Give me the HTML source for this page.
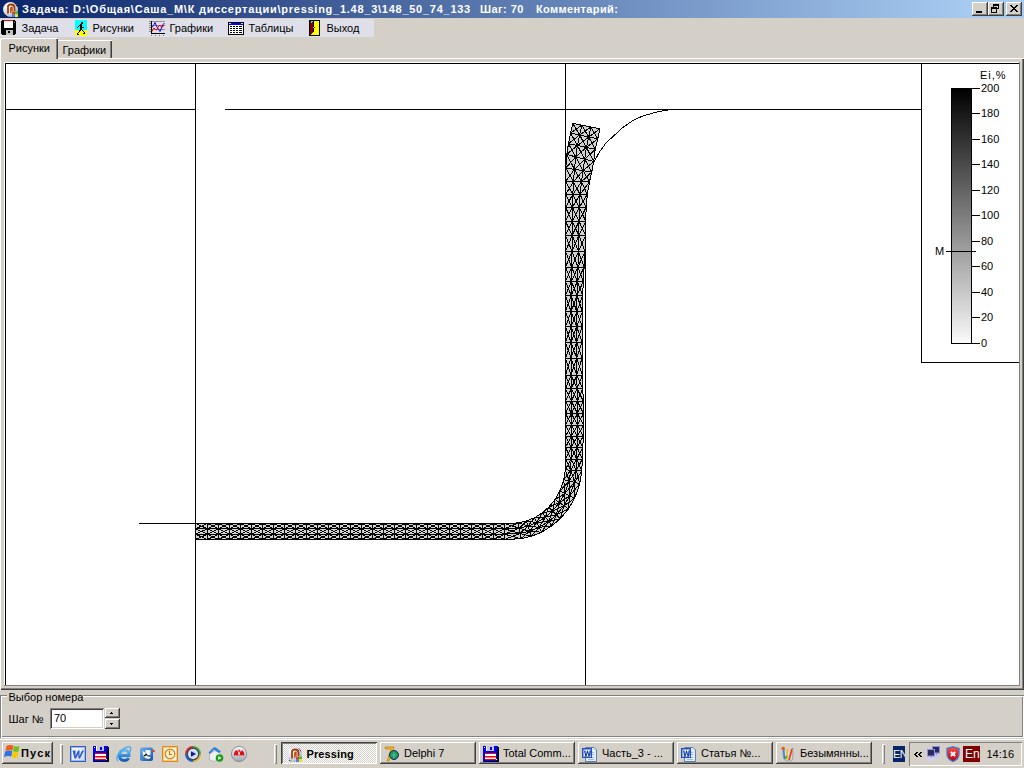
<!DOCTYPE html>
<html><head><meta charset="utf-8"><style>
html,body{margin:0;padding:0;}
body{width:1024px;height:768px;overflow:hidden;position:relative;background:#D4D0C8;font-family:"Liberation Sans", sans-serif;font-size:11px;}
.tx{position:absolute;white-space:nowrap;line-height:12px;font-size:11px;}
div{box-sizing:border-box;}
</style></head><body>
<div style="position:absolute;left:0px;top:0px;width:1024px;height:18px;background:linear-gradient(to right,#0A246A 0px,#A6CAF0 970px);"></div><svg style="position:absolute;left:2px;top:1px;" width="16" height="16" viewBox="0 0 16 16"><defs><radialGradient id="cd" cx="0.35" cy="0.3" r="0.8"><stop offset="0" stop-color="#FFFFFF"/><stop offset="0.5" stop-color="#D8E4F0"/><stop offset="1" stop-color="#A0A8C0"/></radialGradient></defs><circle cx="8.5" cy="8.5" r="7.5" fill="url(#cd)"/><path d="M13,2.5 L15.5,6 M3,14 L5.5,16" stroke="#000" stroke-width="1" stroke-dasharray="1 1"/><path d="M6,12.5 V5.5 Q6,3.5 9,3.5 Q12.5,3.5 12.5,7 V10" fill="none" stroke="#A83808" stroke-width="1.8"/><path d="M8.8,12 V7 Q8.8,6 10,6.3 V10" fill="none" stroke="#C05010" stroke-width="1.4"/><rect x="10" y="10.5" width="3" height="2.5" fill="#F04010"/><rect x="13" y="10.5" width="3" height="2.5" fill="#40C040"/><rect x="10" y="13" width="3" height="3" fill="#5080E0"/><rect x="13" y="13" width="3" height="3" fill="#F0E020"/></svg><div class="tx" style="left:22px;top:3px;font-weight:bold;color:#FFF;letter-spacing:0.74px;">Задача: D:\Общая\Саша_М\К диссертации\pressing_1.48_3\148_50_74_133</div><div class="tx" style="left:480px;top:3px;font-weight:bold;color:#FFF;letter-spacing:0.45px;">Шаг: 70</div><div class="tx" style="left:536px;top:3px;font-weight:bold;color:#FFF;letter-spacing:0.37px;">Комментарий:</div><div style="position:absolute;left:972px;top:2px;width:16px;height:14px;background:#D4D0C8;box-shadow: inset -1px -1px #404040, inset 1px 1px #FFFFFF, inset -2px -2px #808080;"></div><div style="position:absolute;left:988px;top:2px;width:16px;height:14px;background:#D4D0C8;box-shadow: inset -1px -1px #404040, inset 1px 1px #FFFFFF, inset -2px -2px #808080;"></div><div style="position:absolute;left:1006px;top:2px;width:16px;height:14px;background:#D4D0C8;box-shadow: inset -1px -1px #404040, inset 1px 1px #FFFFFF, inset -2px -2px #808080;"></div><div style="position:absolute;left:976px;top:11px;width:6px;height:2px;background:#000;"></div><svg style="position:absolute;left:991px;top:4px;shape-rendering:crispEdges" width="8" height="9" viewBox="0 0 8 9"><g fill="#000"><rect x="2" y="0" width="1" height="1"/><rect x="3" y="0" width="1" height="1"/><rect x="4" y="0" width="1" height="1"/><rect x="5" y="0" width="1" height="1"/><rect x="6" y="0" width="1" height="1"/><rect x="7" y="0" width="1" height="1"/><rect x="2" y="1" width="1" height="1"/><rect x="3" y="1" width="1" height="1"/><rect x="4" y="1" width="1" height="1"/><rect x="5" y="1" width="1" height="1"/><rect x="6" y="1" width="1" height="1"/><rect x="7" y="1" width="1" height="1"/><rect x="2" y="2" width="1" height="1"/><rect x="7" y="2" width="1" height="1"/><rect x="0" y="3" width="1" height="1"/><rect x="1" y="3" width="1" height="1"/><rect x="2" y="3" width="1" height="1"/><rect x="3" y="3" width="1" height="1"/><rect x="4" y="3" width="1" height="1"/><rect x="5" y="3" width="1" height="1"/><rect x="7" y="3" width="1" height="1"/><rect x="0" y="4" width="1" height="1"/><rect x="1" y="4" width="1" height="1"/><rect x="2" y="4" width="1" height="1"/><rect x="3" y="4" width="1" height="1"/><rect x="4" y="4" width="1" height="1"/><rect x="5" y="4" width="1" height="1"/><rect x="6" y="4" width="1" height="1"/><rect x="7" y="4" width="1" height="1"/><rect x="0" y="5" width="1" height="1"/><rect x="5" y="5" width="1" height="1"/><rect x="0" y="6" width="1" height="1"/><rect x="5" y="6" width="1" height="1"/><rect x="0" y="7" width="1" height="1"/><rect x="5" y="7" width="1" height="1"/><rect x="0" y="8" width="1" height="1"/><rect x="1" y="8" width="1" height="1"/><rect x="2" y="8" width="1" height="1"/><rect x="3" y="8" width="1" height="1"/><rect x="4" y="8" width="1" height="1"/><rect x="5" y="8" width="1" height="1"/></g></svg><svg style="position:absolute;left:1010px;top:5px;shape-rendering:crispEdges" width="8" height="7" viewBox="0 0 8 7"><g fill="#000"><rect x="0" y="0" width="1" height="1"/><rect x="1" y="0" width="1" height="1"/><rect x="6" y="0" width="1" height="1"/><rect x="7" y="0" width="1" height="1"/><rect x="1" y="1" width="1" height="1"/><rect x="2" y="1" width="1" height="1"/><rect x="5" y="1" width="1" height="1"/><rect x="6" y="1" width="1" height="1"/><rect x="2" y="2" width="1" height="1"/><rect x="3" y="2" width="1" height="1"/><rect x="4" y="2" width="1" height="1"/><rect x="5" y="2" width="1" height="1"/><rect x="3" y="3" width="1" height="1"/><rect x="4" y="3" width="1" height="1"/><rect x="2" y="4" width="1" height="1"/><rect x="3" y="4" width="1" height="1"/><rect x="4" y="4" width="1" height="1"/><rect x="5" y="4" width="1" height="1"/><rect x="1" y="5" width="1" height="1"/><rect x="2" y="5" width="1" height="1"/><rect x="5" y="5" width="1" height="1"/><rect x="6" y="5" width="1" height="1"/><rect x="0" y="6" width="1" height="1"/><rect x="1" y="6" width="1" height="1"/><rect x="6" y="6" width="1" height="1"/><rect x="7" y="6" width="1" height="1"/></g></svg><div style="position:absolute;left:0px;top:18px;width:1024px;height:20px;background:#D4D0C8;"></div><div style="position:absolute;left:0px;top:19px;width:374px;height:18px;background:#DEDFE8;"></div><svg style="position:absolute;left:1px;top:20px;shape-rendering:crispEdges" width="15" height="15" viewBox="0 0 15 15"><path d="M1,0H14V1H15V14H14V15H1V14H0V1H1Z" fill="#000"/><rect x="3" y="0" width="9" height="1" fill="#FF0000"/><rect x="3" y="1" width="9" height="7" fill="#FFFFFF"/><rect x="5" y="10" width="7" height="5" fill="#C0C0C0"/><rect x="7" y="11" width="2" height="2" fill="#000"/><rect x="13" y="2" width="1" height="1" fill="#909090"/></svg><div class="tx" style="left:21.5px;top:22px;color:#000;">Задача</div><svg style="position:absolute;left:75px;top:20px;shape-rendering:crispEdges" width="12" height="16" viewBox="0 0 12 16"><rect x="0" y="0" width="12" height="10" fill="#00FFFF"/><rect x="0" y="10" width="12" height="6" fill="#FFFF00"/><g fill="#000"><rect x="6" y="2" width="2" height="1"/><rect x="6" y="3" width="2" height="1"/><rect x="5" y="4" width="2" height="1"/><rect x="4" y="5" width="3" height="1"/><rect x="3" y="6" width="1" height="1"/><rect x="5" y="6" width="2" height="1"/><rect x="2" y="7" width="1" height="1"/><rect x="5" y="7" width="4" height="1"/><rect x="5" y="8" width="2" height="1"/><rect x="5" y="9" width="2" height="1"/><rect x="4" y="10" width="2" height="1"/><rect x="7" y="10" width="1" height="1"/><rect x="4" y="11" width="1" height="1"/><rect x="8" y="11" width="1" height="1"/><rect x="3" y="12" width="1" height="1"/><rect x="9" y="12" width="1" height="1"/><rect x="2" y="13" width="1" height="1"/><rect x="8" y="13" width="2" height="1"/><rect x="2" y="14" width="2" height="1"/></g></svg><div class="tx" style="left:92.5px;top:22px;color:#000;">Рисунки</div><svg style="position:absolute;left:149px;top:20px;" width="16" height="16" viewBox="0 0 16 16"><path d="M0,1.5H16M0,5.5H16M0,9.5H16" stroke="#909090" stroke-width="1"/><path d="M0,3.5h2M0,7.5h2M0,11.5h2M2.5,15v1M6.5,15v1M10.5,15v1M14.5,15v1" stroke="#808080" stroke-width="1"/><path d="M3,7.5L5,4.5L6,2.5L7,5L8,7L10,10L11,11.5L12,9L13,6L14,4.5L15.5,3" stroke="#0000FF" fill="none" stroke-width="1"/><path d="M3,11.5L4,9.5L5,8L7,10L8,9.5L9,7L10,6L11,5L12,6.5L13,7.5L14,6L15.5,5" stroke="#FF0000" fill="none" stroke-width="1"/><rect x="2" y="1" width="1" height="13" fill="#000"/><rect x="2" y="13" width="14" height="1" fill="#000"/></svg><div class="tx" style="left:169.5px;top:22px;color:#000;">Графики</div><svg style="position:absolute;left:228px;top:22px;shape-rendering:crispEdges" width="16" height="13" viewBox="0 0 16 13"><rect x="0" y="0" width="16" height="13" fill="#000"/><rect x="1" y="1" width="14" height="11" fill="#FFF"/><rect x="1" y="1" width="14" height="2" fill="#0000FF"/><rect x="1" y="1" width="2" height="1" fill="#E0E0B0"/><rect x="13" y="1" width="2" height="1" fill="#E0E0B0"/><rect x="2" y="4" width="2" height="1" fill="#000"/><rect x="5" y="4" width="2" height="1" fill="#000"/><rect x="8" y="4" width="2" height="1" fill="#000"/><rect x="11" y="4" width="3" height="1" fill="#000"/><rect x="2" y="6" width="2" height="1" fill="#000"/><rect x="5" y="6" width="2" height="1" fill="#000"/><rect x="8" y="6" width="2" height="1" fill="#000"/><rect x="11" y="6" width="3" height="1" fill="#000"/><rect x="2" y="8" width="2" height="1" fill="#000"/><rect x="5" y="8" width="2" height="1" fill="#000"/><rect x="8" y="8" width="2" height="1" fill="#000"/><rect x="11" y="8" width="3" height="1" fill="#000"/><rect x="2" y="10" width="2" height="1" fill="#000"/><rect x="5" y="10" width="2" height="1" fill="#000"/><rect x="8" y="10" width="2" height="1" fill="#000"/><rect x="11" y="10" width="3" height="1" fill="#000"/></svg><div class="tx" style="left:248.5px;top:22px;color:#000;">Таблицы</div><svg style="position:absolute;left:309px;top:20px;shape-rendering:crispEdges" width="11" height="16" viewBox="0 0 11 16"><rect x="0" y="0" width="11" height="16" fill="#000"/><rect x="1" y="1" width="3" height="14" fill="#800000"/><rect x="5" y="1" width="5" height="14" fill="#FFFF00"/><rect x="4" y="12" width="1" height="3" fill="#FFFF00"/><rect x="3" y="13" width="1" height="2" fill="#FFFF00"/><rect x="2" y="14" width="1" height="1" fill="#FFFF00"/><rect x="2" y="1" width="2" height="1" fill="#00FFFF"/><rect x="2" y="2" width="1" height="1" fill="#00FFFF"/><rect x="4" y="7" width="1" height="1" fill="#FFFF00"/><rect x="5" y="7" width="1" height="1" fill="#000"/></svg><div class="tx" style="left:326.5px;top:22px;color:#000;">Выход</div><div style="position:absolute;left:0px;top:58px;width:1024px;height:632px;background:#D4D0C8;box-shadow: inset 1px 1px #FFFFFF, inset -1px -1px #404040, inset -2px -2px #808080;"></div><div style="position:absolute;left:57px;top:40px;width:55px;height:18px;background:#D4D0C8;box-shadow: inset 0 1px #FFFFFF, inset -1px 0 #404040, inset -2px 0 #808080;"></div><div class="tx" style="left:62.5px;top:44px;color:#000;">Графики</div><div style="position:absolute;left:0px;top:38px;width:58px;height:21px;background:#D4D0C8;box-shadow: inset 1px 1px #FFFFFF, inset -1px 0 #404040, inset -2px 0 #808080;border-top-left-radius:2px;"></div><div class="tx" style="left:8.5px;top:42px;color:#000;">Рисунки</div><div style="position:absolute;left:4px;top:62px;width:1016px;height:624px;background:#FFF;box-shadow: inset 1px 1px #FFFFFF, inset -1px -1px #808080;overflow:hidden"><svg style="position:absolute;left:0;top:0" width="1015" height="623" viewBox="4 62 1015 623" shape-rendering="crispEdges"><path d="M5.5,63V685M5,63.5H1019" stroke="#000"/><path d="M5,109.5H195M225,109.5H921M195.5,63V685M565.5,63V470M585.5,243V685M139,523.5H196" stroke="#000"/><path d="M671,109.5 L658,111.7 L644,115.6 L634.5,119.5 L623,127.3 L606,143 L599.5,152 L594.3,161.2 L591,168" fill="none" stroke="#000"/><path d="M921.5,63V362.5H1019" fill="none" stroke="#000"/><defs><linearGradient id="g" x1="0" y1="0" x2="0" y2="1"><stop offset="0" stop-color="#000"/><stop offset="1" stop-color="#FAFAFA"/></linearGradient></defs><rect x="951.5" y="88.5" width="20" height="255" fill="url(#g)" stroke="#000"/><path d="M971,88.5H980M971,113.5H980M971,139.5H980M971,164.5H980M971,190.5H980M971,215.5H980M971,241.5H980M971,266.5H980M971,292.5H980M971,317.5H980M971,343.5H980M946,251.5H976" stroke="#000"/><path d="M195.5,523.5 L207.5,523.5 L218.5,523.5 L229.5,523.5 L240.5,523.5 L251.5,523.5 L262.5,523.5 L273.5,523.5 L284.5,523.5 L295.5,523.5 L306.5,523.5 L317.5,523.5 L328.5,523.5 L339.5,523.5 L350.5,523.5 L361.5,523.5 L372.5,523.5 L383.5,523.5 L394.5,523.5 L405.5,523.5 L416.5,523.5 L427.5,523.5 L438.5,523.5 L449.5,523.5 L460.5,523.5 L471.5,523.5 L482.5,523.5 L493.5,523.5 L504.5,523.5 L518.4,522.9 L526.4,521.0 L534.4,517.8 L542.4,512.8 L548.7,507.2 L555.1,499.5 L559.8,491.1 L563.8,479.7 L565.3,469.8 L565.5,459.0 L565.5,447.3 L565.5,436.3 L565.5,425.2 L565.5,413.5 L565.5,401.1 L565.5,388.7 L565.5,375.1 L565.5,358.0 L565.5,342.3 L565.5,326.7 L565.5,311.7 L565.5,295.5 L565.5,281.5 L565.5,267.2 L565.5,251.5 L565.5,235.4 L565.5,221.3 L565.5,207.3 L565.5,194.5 L565.5,181.7 L565.8,168.0 L566.7,154.5 L568.5,143.6 L570.5,133.1 L572.8,123.3 L599.8,128.8 L597.8,138.9 L595.3,149.3 L593.7,161.5 L591.8,172.0 L589.5,181.7 L587.3,194.5 L586.2,207.3 L585.7,221.3 L585.6,235.4 L585.0,251.5 L584.1,267.2 L583.3,281.5 L582.7,295.5 L582.4,311.7 L582.2,326.7 L582.1,342.3 L582.1,358.0 L582.4,375.1 L582.8,388.7 L583.3,401.1 L583.5,413.5 L583.5,425.2 L583.3,436.3 L582.8,447.3 L582.3,459.0 L581.8,471.0 L579.8,483.7 L574.7,498.2 L568.4,508.9 L560.2,518.7 L551.9,525.8 L541.5,532.2 L531.2,536.3 L520.8,538.7 L504.5,539.5 L493.5,539.5 L482.5,539.5 L471.5,539.5 L460.5,539.5 L449.5,539.5 L438.5,539.5 L427.5,539.5 L416.5,539.5 L405.5,539.5 L394.5,539.5 L383.5,539.5 L372.5,539.5 L361.5,539.5 L350.5,539.5 L339.5,539.5 L328.5,539.5 L317.5,539.5 L306.5,539.5 L295.5,539.5 L284.5,539.5 L273.5,539.5 L262.5,539.5 L251.5,539.5 L240.5,539.5 L229.5,539.5 L218.5,539.5 L207.5,539.5 L195.5,539.5Z" fill="#D2D2D2" stroke="#000"/><path d="M195.5,523.5L207.5,528.8M195.5,528.8L207.5,523.5M195.5,528.8L207.5,534.2M195.5,534.2L207.5,528.8M195.5,534.2L207.5,539.5M195.5,539.5L207.5,534.2M207.5,523.5L218.5,528.8M207.5,528.8L218.5,523.5M207.5,528.8L218.5,534.2M207.5,534.2L218.5,528.8M207.5,534.2L218.5,539.5M207.5,539.5L218.5,534.2M218.5,523.5L229.5,528.8M218.5,528.8L229.5,523.5M218.5,528.8L229.5,534.2M218.5,534.2L229.5,528.8M218.5,534.2L229.5,539.5M218.5,539.5L229.5,534.2M229.5,523.5L240.5,528.8M229.5,528.8L240.5,523.5M229.5,528.8L240.5,534.2M229.5,534.2L240.5,528.8M229.5,534.2L240.5,539.5M229.5,539.5L240.5,534.2M240.5,523.5L251.5,528.8M240.5,528.8L251.5,523.5M240.5,528.8L251.5,534.2M240.5,534.2L251.5,528.8M240.5,534.2L251.5,539.5M240.5,539.5L251.5,534.2M251.5,523.5L262.5,528.8M251.5,528.8L262.5,523.5M251.5,528.8L262.5,534.2M251.5,534.2L262.5,528.8M251.5,534.2L262.5,539.5M251.5,539.5L262.5,534.2M262.5,523.5L273.5,528.8M262.5,528.8L273.5,523.5M262.5,528.8L273.5,534.2M262.5,534.2L273.5,528.8M262.5,534.2L273.5,539.5M262.5,539.5L273.5,534.2M273.5,523.5L284.5,528.8M273.5,528.8L284.5,523.5M273.5,528.8L284.5,534.2M273.5,534.2L284.5,528.8M273.5,534.2L284.5,539.5M273.5,539.5L284.5,534.2M284.5,523.5L295.5,528.8M284.5,528.8L295.5,523.5M284.5,528.8L295.5,534.2M284.5,534.2L295.5,528.8M284.5,534.2L295.5,539.5M284.5,539.5L295.5,534.2M295.5,523.5L306.5,528.8M295.5,528.8L306.5,523.5M295.5,528.8L306.5,534.2M295.5,534.2L306.5,528.8M295.5,534.2L306.5,539.5M295.5,539.5L306.5,534.2M306.5,523.5L317.5,528.8M306.5,528.8L317.5,523.5M306.5,528.8L317.5,534.2M306.5,534.2L317.5,528.8M306.5,534.2L317.5,539.5M306.5,539.5L317.5,534.2M317.5,523.5L328.5,528.8M317.5,528.8L328.5,523.5M317.5,528.8L328.5,534.2M317.5,534.2L328.5,528.8M317.5,534.2L328.5,539.5M317.5,539.5L328.5,534.2M328.5,523.5L339.5,528.8M328.5,528.8L339.5,523.5M328.5,528.8L339.5,534.2M328.5,534.2L339.5,528.8M328.5,534.2L339.5,539.5M328.5,539.5L339.5,534.2M339.5,523.5L350.5,528.8M339.5,528.8L350.5,523.5M339.5,528.8L350.5,534.2M339.5,534.2L350.5,528.8M339.5,534.2L350.5,539.5M339.5,539.5L350.5,534.2M350.5,523.5L361.5,528.8M350.5,528.8L361.5,523.5M350.5,528.8L361.5,534.2M350.5,534.2L361.5,528.8M350.5,534.2L361.5,539.5M350.5,539.5L361.5,534.2M361.5,523.5L372.5,528.8M361.5,528.8L372.5,523.5M361.5,528.8L372.5,534.2M361.5,534.2L372.5,528.8M361.5,534.2L372.5,539.5M361.5,539.5L372.5,534.2M372.5,523.5L383.5,528.8M372.5,528.8L383.5,523.5M372.5,528.8L383.5,534.2M372.5,534.2L383.5,528.8M372.5,534.2L383.5,539.5M372.5,539.5L383.5,534.2M383.5,523.5L394.5,528.8M383.5,528.8L394.5,523.5M383.5,528.8L394.5,534.2M383.5,534.2L394.5,528.8M383.5,534.2L394.5,539.5M383.5,539.5L394.5,534.2M394.5,523.5L405.5,528.8M394.5,528.8L405.5,523.5M394.5,528.8L405.5,534.2M394.5,534.2L405.5,528.8M394.5,534.2L405.5,539.5M394.5,539.5L405.5,534.2M405.5,523.5L416.5,528.8M405.5,528.8L416.5,523.5M405.5,528.8L416.5,534.2M405.5,534.2L416.5,528.8M405.5,534.2L416.5,539.5M405.5,539.5L416.5,534.2M416.5,523.5L427.5,528.8M416.5,528.8L427.5,523.5M416.5,528.8L427.5,534.2M416.5,534.2L427.5,528.8M416.5,534.2L427.5,539.5M416.5,539.5L427.5,534.2M427.5,523.5L438.5,528.8M427.5,528.8L438.5,523.5M427.5,528.8L438.5,534.2M427.5,534.2L438.5,528.8M427.5,534.2L438.5,539.5M427.5,539.5L438.5,534.2M438.5,523.5L449.5,528.8M438.5,528.8L449.5,523.5M438.5,528.8L449.5,534.2M438.5,534.2L449.5,528.8M438.5,534.2L449.5,539.5M438.5,539.5L449.5,534.2M449.5,523.5L460.5,528.8M449.5,528.8L460.5,523.5M449.5,528.8L460.5,534.2M449.5,534.2L460.5,528.8M449.5,534.2L460.5,539.5M449.5,539.5L460.5,534.2M460.5,523.5L471.5,528.8M460.5,528.8L471.5,523.5M460.5,528.8L471.5,534.2M460.5,534.2L471.5,528.8M460.5,534.2L471.5,539.5M460.5,539.5L471.5,534.2M471.5,523.5L482.5,528.8M471.5,528.8L482.5,523.5M471.5,528.8L482.5,534.2M471.5,534.2L482.5,528.8M471.5,534.2L482.5,539.5M471.5,539.5L482.5,534.2M482.5,523.5L493.5,528.8M482.5,528.8L493.5,523.5M482.5,528.8L493.5,534.2M482.5,534.2L493.5,528.8M482.5,534.2L493.5,539.5M482.5,539.5L493.5,534.2M493.5,523.5L504.5,528.8M493.5,528.8L504.5,523.5M493.5,528.8L504.5,534.2M493.5,534.2L504.5,528.8M493.5,534.2L504.5,539.5M493.5,539.5L504.5,534.2M504.5,523.5L519.2,528.2M504.5,528.8L518.4,522.9M504.5,528.8L520.0,533.4M504.5,534.2L519.2,528.2M504.5,534.2L520.8,538.7M504.5,539.5L520.0,533.4M518.4,522.9L528.0,526.1M519.2,528.2L526.4,521.0M519.2,528.2L529.6,531.2M520.0,533.4L528.0,526.1M520.0,533.4L531.2,536.3M520.8,538.7L529.6,531.2M526.4,521.0L536.7,522.6M528.0,526.1L534.4,517.8M528.0,526.1L539.1,527.4M529.6,531.2L536.7,522.6M529.6,531.2L541.5,532.2M531.2,536.3L539.1,527.4M534.4,517.8L545.5,517.1M536.7,522.6L542.4,512.8M536.7,522.6L548.7,521.5M539.1,527.4L545.5,517.1M539.1,527.4L551.9,525.8M541.5,532.2L548.7,521.5M542.4,512.8L552.5,511.1M545.5,517.1L548.7,507.2M545.5,517.1L556.3,514.9M548.7,521.5L552.5,511.1M548.7,521.5L560.2,518.7M551.9,525.8L556.3,514.9M548.7,507.2L559.5,502.6M552.5,511.1L555.1,499.5M552.5,511.1L564.0,505.8M556.3,514.9L559.5,502.6M556.3,514.9L568.4,508.9M560.2,518.7L564.0,505.8M555.1,499.5L564.8,493.5M559.5,502.6L559.8,491.1M559.5,502.6L569.7,495.8M564.0,505.8L564.8,493.5M564.0,505.8L574.7,498.2M568.4,508.9L569.7,495.8M559.8,491.1L569.2,481.0M564.8,493.5L563.8,479.7M564.8,493.5L574.5,482.3M569.7,495.8L569.2,481.0M569.7,495.8L579.8,483.7M574.7,498.2L574.5,482.3M563.8,479.7L570.8,470.2M569.2,481.0L565.3,469.8M569.2,481.0L576.3,470.6M574.5,482.3L570.8,470.2M574.5,482.3L581.8,471.0M579.8,483.7L576.3,470.6M565.3,469.8L571.1,459.0M570.8,470.2L565.5,459.0M570.8,470.2L576.7,459.0M576.3,470.6L571.1,459.0M576.3,470.6L582.3,459.0M581.8,471.0L576.7,459.0M565.5,459.0L571.3,447.3M571.1,459.0L565.5,447.3M571.1,459.0L577.0,447.3M576.7,459.0L571.3,447.3M576.7,459.0L582.8,447.3M582.3,459.0L577.0,447.3M565.5,447.3L571.4,436.3M571.3,447.3L565.5,436.3M571.3,447.3L577.3,436.3M577.0,447.3L571.4,436.3M577.0,447.3L583.3,436.3M582.8,447.3L577.3,436.3M565.5,436.3L571.5,425.2M571.4,436.3L565.5,425.2M571.4,436.3L577.5,425.2M577.3,436.3L571.5,425.2M577.3,436.3L583.5,425.2M583.3,436.3L577.5,425.2M565.5,425.2L571.5,413.5M571.5,425.2L565.5,413.5M571.5,425.2L577.5,413.5M577.5,425.2L571.5,413.5M577.5,425.2L583.5,413.5M583.5,425.2L577.5,413.5M565.5,413.5L571.4,401.1M571.5,413.5L565.5,401.1M571.5,413.5L577.4,401.1M577.5,413.5L571.4,401.1M577.5,413.5L583.3,401.1M583.5,413.5L577.4,401.1M565.5,401.1L571.3,388.7M571.4,401.1L565.5,388.7M571.4,401.1L577.1,388.7M577.4,401.1L571.3,388.7M577.4,401.1L582.8,388.7M583.3,401.1L577.1,388.7M565.5,388.7L571.1,375.1M571.3,388.7L565.5,375.1M571.3,388.7L576.8,375.1M577.1,388.7L571.1,375.1M577.1,388.7L582.4,375.1M582.8,388.7L576.8,375.1M565.5,375.1L571.0,358.0M571.1,375.1L565.5,358.0M571.1,375.1L576.6,358.0M576.8,375.1L571.0,358.0M576.8,375.1L582.1,358.0M582.4,375.1L576.6,358.0M565.5,358.0L571.0,342.3M571.0,358.0L565.5,342.3M571.0,358.0L576.6,342.3M576.6,358.0L571.0,342.3M576.6,358.0L582.1,342.3M582.1,358.0L576.6,342.3M565.5,342.3L571.1,326.7M571.0,342.3L565.5,326.7M571.0,342.3L576.7,326.7M576.6,342.3L571.1,326.7M576.6,342.3L582.2,326.7M582.1,342.3L576.7,326.7M565.5,326.7L571.1,311.7M571.1,326.7L565.5,311.7M571.1,326.7L576.8,311.7M576.7,326.7L571.1,311.7M576.7,326.7L582.4,311.7M582.2,326.7L576.8,311.7M565.5,311.7L571.2,295.5M571.1,311.7L565.5,295.5M571.1,311.7L577.0,295.5M576.8,311.7L571.2,295.5M576.8,311.7L582.7,295.5M582.4,311.7L577.0,295.5M565.5,295.5L571.4,281.5M571.2,295.5L565.5,281.5M571.2,295.5L577.3,281.5M577.0,295.5L571.4,281.5M577.0,295.5L583.3,281.5M582.7,295.5L577.3,281.5M565.5,281.5L571.7,267.2M571.4,281.5L565.5,267.2M571.4,281.5L577.9,267.2M577.3,281.5L571.7,267.2M577.3,281.5L584.1,267.2M583.3,281.5L577.9,267.2M565.5,267.2L572.0,251.5M571.7,267.2L565.5,251.5M571.7,267.2L578.5,251.5M577.9,267.2L572.0,251.5M577.9,267.2L585.0,251.5M584.1,267.2L578.5,251.5M565.5,251.5L572.2,235.4M572.0,251.5L565.5,235.4M572.0,251.5L578.9,235.4M578.5,251.5L572.2,235.4M578.5,251.5L585.6,235.4M585.0,251.5L578.9,235.4M565.5,235.4L572.2,221.3M572.2,235.4L565.5,221.3M572.2,235.4L579.0,221.3M578.9,235.4L572.2,221.3M578.9,235.4L585.7,221.3M585.6,235.4L579.0,221.3M565.5,221.3L572.4,207.3M572.2,221.3L565.5,207.3M572.2,221.3L579.3,207.3M579.0,221.3L572.4,207.3M579.0,221.3L586.2,207.3M585.7,221.3L579.3,207.3M565.5,207.3L572.8,194.5M572.4,207.3L565.5,194.5M572.4,207.3L580.0,194.5M579.3,207.3L572.8,194.5M579.3,207.3L587.3,194.5M586.2,207.3L580.0,194.5M565.5,194.5L573.5,181.7M572.8,194.5L565.5,181.7M572.8,194.5L581.5,181.7M580.0,194.5L573.5,181.7M580.0,194.5L589.5,181.7M587.3,194.5L581.5,181.7M565.5,181.7L574.5,169.3M573.5,181.7L565.8,168.0M573.5,181.7L583.1,170.7M581.5,181.7L574.5,169.3M581.5,181.7L591.8,172.0M589.5,181.7L583.1,170.7M565.8,168.0L575.7,156.8M574.5,169.3L566.7,154.5M574.5,169.3L584.7,159.2M583.1,170.7L575.7,156.8M583.1,170.7L593.7,161.5M591.8,172.0L584.7,159.2M566.7,154.5L577.4,145.5M575.7,156.8L568.5,143.6M575.7,156.8L586.4,147.4M584.7,159.2L577.4,145.5M584.7,159.2L595.3,149.3M593.7,161.5L586.4,147.4M568.5,143.6L579.6,135.0M577.4,145.5L570.5,133.1M577.4,145.5L588.7,137.0M586.4,147.4L579.6,135.0M586.4,147.4L597.8,138.9M595.3,149.3L588.7,137.0M570.5,133.1L581.8,125.1M579.6,135.0L572.8,123.3M579.6,135.0L590.8,127.0M588.7,137.0L581.8,125.1M588.7,137.0L599.8,128.8M597.8,138.9L590.8,127.0M195.5,523.5L207.5,523.5L218.5,523.5L229.5,523.5L240.5,523.5L251.5,523.5L262.5,523.5L273.5,523.5L284.5,523.5L295.5,523.5L306.5,523.5L317.5,523.5L328.5,523.5L339.5,523.5L350.5,523.5L361.5,523.5L372.5,523.5L383.5,523.5L394.5,523.5L405.5,523.5L416.5,523.5L427.5,523.5L438.5,523.5L449.5,523.5L460.5,523.5L471.5,523.5L482.5,523.5L493.5,523.5L504.5,523.5L518.4,522.9L526.4,521.0L534.4,517.8L542.4,512.8L548.7,507.2L555.1,499.5L559.8,491.1L563.8,479.7L565.3,469.8L565.5,459.0L565.5,447.3L565.5,436.3L565.5,425.2L565.5,413.5L565.5,401.1L565.5,388.7L565.5,375.1L565.5,358.0L565.5,342.3L565.5,326.7L565.5,311.7L565.5,295.5L565.5,281.5L565.5,267.2L565.5,251.5L565.5,235.4L565.5,221.3L565.5,207.3L565.5,194.5L565.5,181.7L565.8,168.0L566.7,154.5L568.5,143.6L570.5,133.1L572.8,123.3M195.5,528.8L207.5,528.8L218.5,528.8L229.5,528.8L240.5,528.8L251.5,528.8L262.5,528.8L273.5,528.8L284.5,528.8L295.5,528.8L306.5,528.8L317.5,528.8L328.5,528.8L339.5,528.8L350.5,528.8L361.5,528.8L372.5,528.8L383.5,528.8L394.5,528.8L405.5,528.8L416.5,528.8L427.5,528.8L438.5,528.8L449.5,528.8L460.5,528.8L471.5,528.8L482.5,528.8L493.5,528.8L504.5,528.8L519.2,528.2L528.0,526.1L536.7,522.6L545.5,517.1L552.5,511.1L559.5,502.6L564.8,493.5L569.2,481.0L570.8,470.2L571.1,459.0L571.3,447.3L571.4,436.3L571.5,425.2L571.5,413.5L571.4,401.1L571.3,388.7L571.1,375.1L571.0,358.0L571.0,342.3L571.1,326.7L571.1,311.7L571.2,295.5L571.4,281.5L571.7,267.2L572.0,251.5L572.2,235.4L572.2,221.3L572.4,207.3L572.8,194.5L573.5,181.7L574.5,169.3L575.7,156.8L577.4,145.5L579.6,135.0L581.8,125.1M195.5,534.2L207.5,534.2L218.5,534.2L229.5,534.2L240.5,534.2L251.5,534.2L262.5,534.2L273.5,534.2L284.5,534.2L295.5,534.2L306.5,534.2L317.5,534.2L328.5,534.2L339.5,534.2L350.5,534.2L361.5,534.2L372.5,534.2L383.5,534.2L394.5,534.2L405.5,534.2L416.5,534.2L427.5,534.2L438.5,534.2L449.5,534.2L460.5,534.2L471.5,534.2L482.5,534.2L493.5,534.2L504.5,534.2L520.0,533.4L529.6,531.2L539.1,527.4L548.7,521.5L556.3,514.9L564.0,505.8L569.7,495.8L574.5,482.3L576.3,470.6L576.7,459.0L577.0,447.3L577.3,436.3L577.5,425.2L577.5,413.5L577.4,401.1L577.1,388.7L576.8,375.1L576.6,358.0L576.6,342.3L576.7,326.7L576.8,311.7L577.0,295.5L577.3,281.5L577.9,267.2L578.5,251.5L578.9,235.4L579.0,221.3L579.3,207.3L580.0,194.5L581.5,181.7L583.1,170.7L584.7,159.2L586.4,147.4L588.7,137.0L590.8,127.0M195.5,539.5L207.5,539.5L218.5,539.5L229.5,539.5L240.5,539.5L251.5,539.5L262.5,539.5L273.5,539.5L284.5,539.5L295.5,539.5L306.5,539.5L317.5,539.5L328.5,539.5L339.5,539.5L350.5,539.5L361.5,539.5L372.5,539.5L383.5,539.5L394.5,539.5L405.5,539.5L416.5,539.5L427.5,539.5L438.5,539.5L449.5,539.5L460.5,539.5L471.5,539.5L482.5,539.5L493.5,539.5L504.5,539.5L520.8,538.7L531.2,536.3L541.5,532.2L551.9,525.8L560.2,518.7L568.4,508.9L574.7,498.2L579.8,483.7L581.8,471.0L582.3,459.0L582.8,447.3L583.3,436.3L583.5,425.2L583.5,413.5L583.3,401.1L582.8,388.7L582.4,375.1L582.1,358.0L582.1,342.3L582.2,326.7L582.4,311.7L582.7,295.5L583.3,281.5L584.1,267.2L585.0,251.5L585.6,235.4L585.7,221.3L586.2,207.3L587.3,194.5L589.5,181.7L591.8,172.0L593.7,161.5L595.3,149.3L597.8,138.9L599.8,128.8M195.5,523.5L195.5,539.5M207.5,523.5L207.5,539.5M218.5,523.5L218.5,539.5M229.5,523.5L229.5,539.5M240.5,523.5L240.5,539.5M251.5,523.5L251.5,539.5M262.5,523.5L262.5,539.5M273.5,523.5L273.5,539.5M284.5,523.5L284.5,539.5M295.5,523.5L295.5,539.5M306.5,523.5L306.5,539.5M317.5,523.5L317.5,539.5M328.5,523.5L328.5,539.5M339.5,523.5L339.5,539.5M350.5,523.5L350.5,539.5M361.5,523.5L361.5,539.5M372.5,523.5L372.5,539.5M383.5,523.5L383.5,539.5M394.5,523.5L394.5,539.5M405.5,523.5L405.5,539.5M416.5,523.5L416.5,539.5M427.5,523.5L427.5,539.5M438.5,523.5L438.5,539.5M449.5,523.5L449.5,539.5M460.5,523.5L460.5,539.5M471.5,523.5L471.5,539.5M482.5,523.5L482.5,539.5M493.5,523.5L493.5,539.5M504.5,523.5L504.5,539.5M518.4,522.9L520.8,538.7M526.4,521.0L531.2,536.3M534.4,517.8L541.5,532.2M542.4,512.8L551.9,525.8M548.7,507.2L560.2,518.7M555.1,499.5L568.4,508.9M559.8,491.1L574.7,498.2M563.8,479.7L579.8,483.7M565.3,469.8L581.8,471.0M565.5,459.0L582.3,459.0M565.5,447.3L582.8,447.3M565.5,436.3L583.3,436.3M565.5,425.2L583.5,425.2M565.5,413.5L583.5,413.5M565.5,401.1L583.3,401.1M565.5,388.7L582.8,388.7M565.5,375.1L582.4,375.1M565.5,358.0L582.1,358.0M565.5,342.3L582.1,342.3M565.5,326.7L582.2,326.7M565.5,311.7L582.4,311.7M565.5,295.5L582.7,295.5M565.5,281.5L583.3,281.5M565.5,267.2L584.1,267.2M565.5,251.5L585.0,251.5M565.5,235.4L585.6,235.4M565.5,221.3L585.7,221.3M565.5,207.3L586.2,207.3M565.5,194.5L587.3,194.5M565.5,181.7L589.5,181.7M565.8,168.0L591.8,172.0M566.7,154.5L593.7,161.5M568.5,143.6L595.3,149.3M570.5,133.1L597.8,138.9M572.8,123.3L599.8,128.8" fill="none" stroke="#000" stroke-width="1"/></svg></div><div style="position:absolute;left:1019px;top:62px;width:1px;height:624px;background:#808080;"></div><div style="position:absolute;left:4px;top:685px;width:1016px;height:1px;background:#808080;"></div><div class="tx" style="left:981px;top:82px;color:#000;">200</div><div class="tx" style="left:981px;top:107px;color:#000;">180</div><div class="tx" style="left:981px;top:133px;color:#000;">160</div><div class="tx" style="left:981px;top:158px;color:#000;">140</div><div class="tx" style="left:981px;top:184px;color:#000;">120</div><div class="tx" style="left:981px;top:209px;color:#000;">100</div><div class="tx" style="left:981px;top:235px;color:#000;">80</div><div class="tx" style="left:981px;top:260px;color:#000;">60</div><div class="tx" style="left:981px;top:286px;color:#000;">40</div><div class="tx" style="left:981px;top:311px;color:#000;">20</div><div class="tx" style="left:981px;top:337px;color:#000;">0</div><div class="tx" style="left:980px;top:69px;color:#000;letter-spacing:1px;">Ei,%</div><div class="tx" style="left:935px;top:245px;color:#000;">M</div><div style="position:absolute;left:0px;top:695px;width:1024px;height:43px;box-shadow: inset 1px 1px #808080, inset 2px 2px #FFFFFF, inset -1px -1px #FFFFFF, inset -2px -2px #808080;"></div><div style="position:absolute;left:7px;top:690px;width:76px;height:10px;background:#D4D0C8;"></div><div class="tx" style="left:8.5px;top:691px;color:#000;">Выбор номера</div><div class="tx" style="left:8.5px;top:713px;color:#000;">Шаг №</div><div style="position:absolute;left:50px;top:708px;width:54px;height:21px;background:#FFFFFF;box-shadow: inset 1px 1px #808080, inset -1px -1px #FFFFFF, inset 2px 2px #404040, inset -2px -2px #D4D0C8;"></div><div class="tx" style="left:54px;top:712px;color:#000;">70</div><div style="position:absolute;left:105px;top:708px;width:15px;height:10px;background:#D4D0C8;box-shadow: inset -1px -1px #404040, inset 1px 1px #FFFFFF, inset -2px -2px #808080;"></div><div style="position:absolute;left:105px;top:719px;width:15px;height:10px;background:#D4D0C8;box-shadow: inset -1px -1px #404040, inset 1px 1px #FFFFFF, inset -2px -2px #808080;"></div><svg style="position:absolute;left:105px;top:708px;shape-rendering:crispEdges" width="15" height="21" viewBox="0 0 15 21"><path d="M6,4h1v1h1v1h-3v-1h1z" fill="#000"/><path d="M5,15h3v1h-1v1h-1v-1h-1z" fill="#000"/></svg><div style="position:absolute;left:0px;top:738px;width:1024px;height:30px;background:#D4D0C8;box-shadow: inset 0 1px #D4D0C8, inset 0 2px #FFFFFF;"></div><div style="position:absolute;left:2px;top:742px;width:51px;height:22px;background:#D4D0C8;box-shadow: inset -1px -1px #404040, inset 1px 1px #FFFFFF, inset -2px -2px #808080;"></div><svg style="position:absolute;left:4px;top:744px;" width="16" height="16" viewBox="0 0 16 16"><path d="M2.5,2 Q5,0.5 9.5,1.5 L8.5,6.5 Q5,5.5 1.5,7Z" fill="#F06018"/><path d="M10,2 Q12.5,3 15.5,2 L14.5,7.5 Q12,8.5 9,7Z" fill="#70C020"/><path d="M1.2,7.5 Q4.5,6 8.3,7 L7.3,12.5 Q4,11.5 0,13Z" fill="#3070E8"/><path d="M8.8,7.5 Q11.5,8.5 14.3,8 L13.3,13.5 Q10.5,14.5 7.8,13Z" fill="#F8C800"/></svg><div class="tx" style="left:21px;top:747px;font-weight:bold;color:#000;letter-spacing:1.2px;">Пуск</div><div style="position:absolute;left:60px;top:744px;width:3px;height:20px;box-shadow: inset 1px 1px #FFFFFF, inset -1px -1px #808080;"></div><div style="position:absolute;left:274px;top:744px;width:3px;height:20px;box-shadow: inset 1px 1px #FFFFFF, inset -1px -1px #808080;"></div><div style="position:absolute;left:882px;top:744px;width:3px;height:20px;box-shadow: inset 1px 1px #FFFFFF, inset -1px -1px #808080;"></div><svg style="position:absolute;left:70px;top:746px;" width="16" height="16" viewBox="0 0 16 16"><defs><linearGradient id="wg" x1="0" y1="0" x2="1" y2="1"><stop offset="0" stop-color="#FFFFFF"/><stop offset="1" stop-color="#C8D8F8"/></linearGradient></defs><rect x="0.5" y="0.5" width="15" height="15" fill="url(#wg)" stroke="#3060C0"/><rect x="1.5" y="1.5" width="13" height="13" fill="none" stroke="#A0B8E8"/><path d="M2.5,4.5h3L5.5,10L8,4.5h1.5L9.5,10L12,4.5h2L10,12.5H8.5L8.3,8L6,12.5H4.5Z" fill="#3058C8"/></svg><svg style="position:absolute;left:93px;top:746px;" width="16" height="16" viewBox="0 0 16 16"><rect x="0" y="0" width="15" height="16" fill="#0000FF"/><rect x="14" y="1" width="2" height="15" fill="#000"/><rect x="1" y="15" width="15" height="1" fill="#000"/><rect x="0" y="0" width="1" height="16" fill="#0000E0"/><rect x="3" y="0" width="8" height="5" fill="#C8C8C8"/><rect x="7" y="1" width="2" height="3" fill="#0000FF"/><rect x="3" y="0" width="1" height="5" fill="#FFF"/><rect x="2" y="7" width="11" height="7" fill="#FFF"/><rect x="2" y="7" width="11" height="1" fill="#F00"/><rect x="2" y="10" width="11" height="1.5" fill="#F00"/><rect x="2" y="13" width="11" height="1" fill="#F00"/><rect x="13" y="13" width="1" height="1" fill="#FFF"/><rect x="1" y="1" width="1" height="1" fill="#FFF"/></svg><svg style="position:absolute;left:116px;top:746px;" width="16" height="16" viewBox="0 0 16 16"><defs><linearGradient id="ie" x1="0" y1="0" x2="0" y2="1"><stop offset="0" stop-color="#60C0F8"/><stop offset="1" stop-color="#1060C0"/></linearGradient></defs><path d="M3.5,9.5 H13 Q13.5,4 8.5,4 Q3.5,4 3.5,9.5 Q3.5,14.5 8.5,14.5 Q11.5,14.5 12.5,12" fill="none" stroke="url(#ie)" stroke-width="3"/><path d="M2,15 Q-1,12 4,6 Q10,0 14,1 Q16,3 13,7" fill="none" stroke="#50A8E8" stroke-width="1.3"/></svg><svg style="position:absolute;left:139px;top:746px;" width="16" height="16" viewBox="0 0 16 16"><defs><linearGradient id="oe" x1="0" y1="0" x2="1" y2="1"><stop offset="0" stop-color="#70B0F0"/><stop offset="1" stop-color="#1050B0"/></linearGradient></defs><rect x="1" y="1.5" width="13" height="13.5" rx="2" fill="url(#oe)"/><path d="M3.5,5 Q3.5,13 10,13 L12,11 Q6,11 6,6Z" fill="#F8F0C8"/><rect x="6.5" y="4" width="5" height="5" fill="#F0F4FF"/><path d="M5,10L8,8" stroke="#000" stroke-width="1.3"/><circle cx="14.5" cy="5" r="1.3" fill="#E04020"/></svg><svg style="position:absolute;left:162px;top:746px;" width="16" height="16" viewBox="0 0 16 16"><rect x="0.5" y="0.5" width="15" height="15" fill="#FFF4E0" stroke="#E08A18"/><rect x="1.5" y="1.5" width="13" height="13" fill="none" stroke="#F8C880"/><circle cx="8" cy="8" r="4.8" fill="#FFF0C0" stroke="#D08A30" stroke-width="1.4"/><path d="M7.5,4.8V8.5H10" stroke="#C07820" fill="none" stroke-width="1.2"/></svg><svg style="position:absolute;left:185px;top:746px;" width="16" height="16" viewBox="0 0 16 16"><circle cx="8" cy="8" r="7.5" fill="#404860"/><path d="M8,0.8 A7.2,7.2 0 0 1 15.2,8" stroke="#40B040" stroke-width="1.6" fill="none"/><path d="M15.2,8 A7.2,7.2 0 0 1 8,15.2" stroke="#E0B820" stroke-width="1.6" fill="none"/><path d="M8,15.2 A7.2,7.2 0 0 1 0.8,8" stroke="#2060D0" stroke-width="1.6" fill="none"/><path d="M0.8,8 A7.2,7.2 0 0 1 8,0.8" stroke="#E03020" stroke-width="1.6" fill="none"/><circle cx="8" cy="8" r="5" fill="#E8F0FF"/><circle cx="8" cy="8" r="3.8" fill="#C8D8F8"/><path d="M6,5.3L11,8L6,10.7Z" fill="#102080"/></svg><svg style="position:absolute;left:208px;top:746px;" width="16" height="16" viewBox="0 0 16 16"><path d="M1.5,8 V13.5 L6,15.5 L12.5,13 V7.5 L7,4.5Z" fill="#F0F0F0" stroke="#B0B0B8" stroke-width="0.8"/><path d="M0.5,6.5 L5.5,1.5 Q7,1 8.5,2 L13,5.5 L11,7 L6,3.5 L2,8Z" fill="#3080E0"/><circle cx="11.5" cy="12" r="3.8" fill="#18A018"/><path d="M10.3,10L13.5,12L10.3,14Z" fill="#FFF"/></svg><svg style="position:absolute;left:231px;top:746px;" width="16" height="16" viewBox="0 0 16 16"><defs><linearGradient id="nr" x1="0" y1="0" x2="0" y2="1"><stop offset="0" stop-color="#F8F8FF"/><stop offset="1" stop-color="#A0A4B0"/></linearGradient></defs><circle cx="8" cy="8" r="7.6" fill="url(#nr)" stroke="#808088" stroke-width="0.8"/><path d="M3,10 Q2.5,5 6,4 L7,6 L8,3 L10,6 L11,4 Q14,6 13,10 Q11,8 10,10 Q9,8 8,10 Q7,8 6,10 Q5,8 3,10Z" fill="#E01010"/><path d="M7.5,9 Q6.5,6 8,5 Q9.5,7 8.5,9Z" fill="#FFF"/></svg><div style="position:absolute;left:281px;top:742px;width:96px;height:22px;background-color:#FFFFFF;background-image:linear-gradient(45deg,#D4D0C8 25%,transparent 25%,transparent 75%,#D4D0C8 75%),linear-gradient(45deg,#D4D0C8 25%,transparent 25%,transparent 75%,#D4D0C8 75%);background-size:2px 2px;background-position:0 0,1px 1px;box-shadow: inset 1px 1px #404040, inset -1px -1px #FFFFFF, inset 2px 2px #808080;"></div><svg style="position:absolute;left:286px;top:746px;" width="16" height="16" viewBox="0 0 16 16"><defs><radialGradient id="cd" cx="0.35" cy="0.3" r="0.8"><stop offset="0" stop-color="#FFFFFF"/><stop offset="0.5" stop-color="#D8E4F0"/><stop offset="1" stop-color="#A0A8C0"/></radialGradient></defs><circle cx="8.5" cy="8.5" r="7.5" fill="url(#cd)"/><path d="M13,2.5 L15.5,6 M3,14 L5.5,16" stroke="#000" stroke-width="1" stroke-dasharray="1 1"/><path d="M6,12.5 V5.5 Q6,3.5 9,3.5 Q12.5,3.5 12.5,7 V10" fill="none" stroke="#A83808" stroke-width="1.8"/><path d="M8.8,12 V7 Q8.8,6 10,6.3 V10" fill="none" stroke="#C05010" stroke-width="1.4"/><rect x="10" y="10.5" width="3" height="2.5" fill="#F04010"/><rect x="13" y="10.5" width="3" height="2.5" fill="#40C040"/><rect x="10" y="13" width="3" height="3" fill="#5080E0"/><rect x="13" y="13" width="3" height="3" fill="#F0E020"/></svg><div class="tx" style="left:306.5px;top:748px;font-weight:bold;color:#000;letter-spacing:0.1px;">Pressing</div><div style="position:absolute;left:380px;top:742px;width:96px;height:22px;background:#D4D0C8;box-shadow: inset -1px -1px #404040, inset 1px 1px #FFFFFF, inset -2px -2px #808080;"></div><svg style="position:absolute;left:384px;top:746px;" width="16" height="16" viewBox="0 0 16 16"><path d="M1,1H10L9.5,3L5,15H3L7,3H1.5Z" fill="#F0C020" stroke="#C08010" stroke-width="0.8"/><circle cx="10" cy="9" r="4.5" fill="#18A040" stroke="#202080" stroke-width="1"/><path d="M7.5,9h5M10,6v6" stroke="#60C0F0" stroke-width="0.8"/></svg><div class="tx" style="left:404px;top:747px;color:#000;">Delphi 7</div><div style="position:absolute;left:479px;top:742px;width:96px;height:22px;background:#D4D0C8;box-shadow: inset -1px -1px #404040, inset 1px 1px #FFFFFF, inset -2px -2px #808080;"></div><svg style="position:absolute;left:483px;top:746px;" width="16" height="16" viewBox="0 0 16 16"><rect x="0" y="0" width="15" height="16" fill="#0000FF"/><rect x="14" y="1" width="2" height="15" fill="#000"/><rect x="1" y="15" width="15" height="1" fill="#000"/><rect x="0" y="0" width="1" height="16" fill="#0000E0"/><rect x="3" y="0" width="8" height="5" fill="#C8C8C8"/><rect x="7" y="1" width="2" height="3" fill="#0000FF"/><rect x="3" y="0" width="1" height="5" fill="#FFF"/><rect x="2" y="7" width="11" height="7" fill="#FFF"/><rect x="2" y="7" width="11" height="1" fill="#F00"/><rect x="2" y="10" width="11" height="1.5" fill="#F00"/><rect x="2" y="13" width="11" height="1" fill="#F00"/><rect x="13" y="13" width="1" height="1" fill="#FFF"/><rect x="1" y="1" width="1" height="1" fill="#FFF"/></svg><div class="tx" style="left:503px;top:747px;color:#000;">Total Comm...</div><div style="position:absolute;left:578px;top:742px;width:96px;height:22px;background:#D4D0C8;box-shadow: inset -1px -1px #404040, inset 1px 1px #FFFFFF, inset -2px -2px #808080;"></div><svg style="position:absolute;left:582px;top:746px;" width="16" height="16" viewBox="0 0 16 16"><path d="M3.5,1.5H12L14.5,4V15.5H3.5Z" fill="#E0ECFC" stroke="#6080B0"/><path d="M6,11.5h6M6,13.5h6M10,6.5h2M10,8.5h2" stroke="#A0B8E0"/><rect x="0.5" y="2.5" width="9" height="9" fill="#FFF" stroke="#2050C0" stroke-width="1"/><rect x="1.5" y="3.5" width="7" height="7" fill="none" stroke="#2050C0" stroke-width="0.5"/><path d="M2,4.5h1.5L4,8.5L5,4.5h1L7,8.5L7.5,4.5H9L7.8,10.5H6.5L5.5,7L4.6,10.5H3.2Z" fill="#1840A0"/></svg><div class="tx" style="left:602px;top:747px;color:#000;">Часть_3 - ...</div><div style="position:absolute;left:677px;top:742px;width:96px;height:22px;background:#D4D0C8;box-shadow: inset -1px -1px #404040, inset 1px 1px #FFFFFF, inset -2px -2px #808080;"></div><svg style="position:absolute;left:681px;top:746px;" width="16" height="16" viewBox="0 0 16 16"><path d="M3.5,1.5H12L14.5,4V15.5H3.5Z" fill="#E0ECFC" stroke="#6080B0"/><path d="M6,11.5h6M6,13.5h6M10,6.5h2M10,8.5h2" stroke="#A0B8E0"/><rect x="0.5" y="2.5" width="9" height="9" fill="#FFF" stroke="#2050C0" stroke-width="1"/><rect x="1.5" y="3.5" width="7" height="7" fill="none" stroke="#2050C0" stroke-width="0.5"/><path d="M2,4.5h1.5L4,8.5L5,4.5h1L7,8.5L7.5,4.5H9L7.8,10.5H6.5L5.5,7L4.6,10.5H3.2Z" fill="#1840A0"/></svg><div class="tx" style="left:701px;top:747px;color:#000;">Статья №...</div><div style="position:absolute;left:776px;top:742px;width:96px;height:22px;background:#D4D0C8;box-shadow: inset -1px -1px #404040, inset 1px 1px #FFFFFF, inset -2px -2px #808080;"></div><svg style="position:absolute;left:780px;top:746px;" width="16" height="16" viewBox="0 0 16 16"><path d="M3,5 Q3,15 7,15 L11,15 Q13,15 13,5" fill="#D8E0F0" stroke="#7080A0" stroke-width="0.8" opacity="0.8"/><path d="M4.5,13L3.5,2" stroke="#3080F0" stroke-width="1.6"/><circle cx="3.2" cy="2.5" r="1.8" fill="#E06010"/><path d="M6.5,14L7.5,3" stroke="#F0C000" stroke-width="1.6"/><path d="M9,14L12,3" stroke="#F04010" stroke-width="1.8"/><path d="M5,12.5L7,10" stroke="#20B020" stroke-width="1.5"/><path d="M12.5,3L13,2" stroke="#8090E0" stroke-width="1.5"/></svg><div class="tx" style="left:800px;top:747px;color:#000;">Безымянны...</div><div style="position:absolute;left:893px;top:746px;width:12px;height:16px;background:#0A2468;"></div><div class="tx" style="left:893px;top:748px;color:#000;color:#FFF;width:12px;overflow:hidden;letter-spacing:-0.5px;">EN</div><div style="position:absolute;left:909px;top:742px;width:113px;height:24px;box-shadow: inset 1px 1px #808080, inset -1px -1px #FFFFFF;"></div><svg style="position:absolute;left:914px;top:752px;shape-rendering:crispEdges" width="8" height="5" viewBox="0 0 8 5"><g fill="#000"><rect x="2" y="0" width="1" height="1"/><rect x="3" y="0" width="1" height="1"/><rect x="1" y="1" width="1" height="1"/><rect x="2" y="1" width="1" height="1"/><rect x="0" y="2" width="1" height="1"/><rect x="1" y="2" width="1" height="1"/><rect x="1" y="3" width="1" height="1"/><rect x="2" y="3" width="1" height="1"/><rect x="2" y="4" width="1" height="1"/><rect x="3" y="4" width="1" height="1"/><rect x="6" y="0" width="1" height="1"/><rect x="7" y="0" width="1" height="1"/><rect x="5" y="1" width="1" height="1"/><rect x="6" y="1" width="1" height="1"/><rect x="4" y="2" width="1" height="1"/><rect x="5" y="2" width="1" height="1"/><rect x="5" y="3" width="1" height="1"/><rect x="6" y="3" width="1" height="1"/><rect x="6" y="4" width="1" height="1"/><rect x="7" y="4" width="1" height="1"/></g></svg><svg style="position:absolute;left:926px;top:746px;" width="16" height="16" viewBox="0 0 16 16"><ellipse cx="10.5" cy="9.8" rx="3.2" ry="1.8" fill="#C8C8F0"/><rect x="10" y="7" width="1" height="2" fill="#9090D0"/><rect x="6.5" y="0.5" width="7" height="6.5" fill="#2A2A60" stroke="#8C90E0"/><ellipse cx="5" cy="13.2" rx="4" ry="2.2" fill="#D0D0F4"/><rect x="4.5" y="10" width="1" height="2" fill="#9090D0"/><rect x="1.5" y="3.5" width="7" height="6.5" fill="#2A2A60" stroke="#8C90E0"/></svg><svg style="position:absolute;left:946px;top:746px;" width="14" height="16" viewBox="0 0 14 16"><defs><linearGradient id="sh" x1="0" y1="0" x2="0" y2="1"><stop offset="0" stop-color="#FF5050"/><stop offset="1" stop-color="#B00010"/></linearGradient></defs><path d="M7,0.8 L13,2.5 V8 Q13,13 7,15.5 Q1,13 1,8 V2.5Z" fill="url(#sh)" stroke="#5070C0" stroke-width="1.3"/><path d="M4.8,6 L9.2,10.2 M9.2,6 L4.8,10.2" stroke="#FFF" stroke-width="1.8"/></svg><div style="position:absolute;left:963px;top:746px;width:17px;height:16px;background:#800000;"></div><div class="tx" style="left:965px;top:748px;color:#000;color:#FFF;font-size:12px;">En</div><div class="tx" style="left:986.5px;top:748px;color:#000;">14:16</div>
</body></html>
